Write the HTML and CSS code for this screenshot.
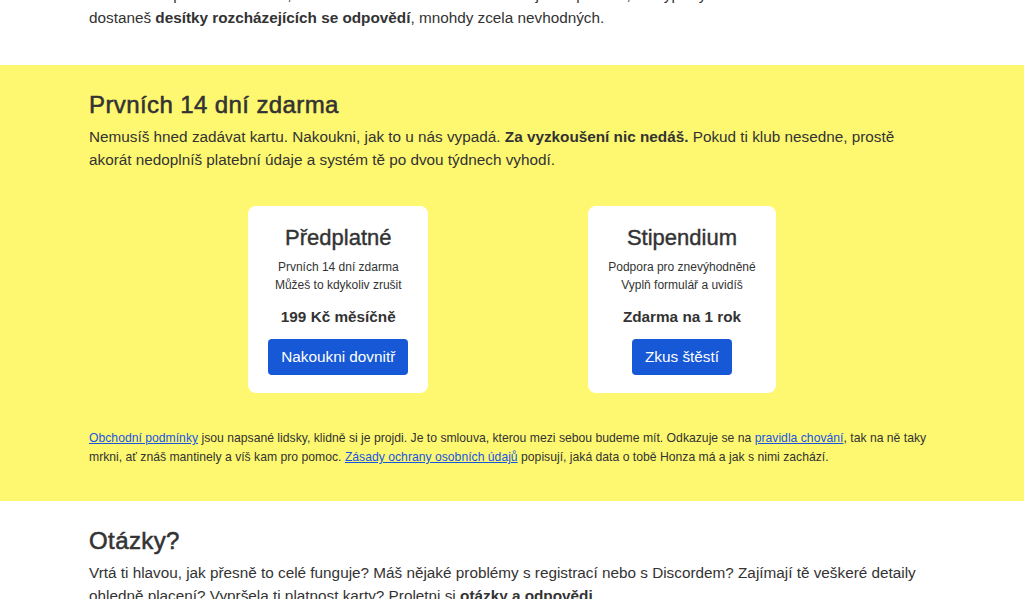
FILE: index.html
```html
<!DOCTYPE html>
<html lang="cs">
<head>
<meta charset="utf-8">
<title>Klub</title>
<link rel="stylesheet" href="styles.css">
</head>
<body>
<section class="section section-intro">
  <div class="container">
    <p class="lead">Pokud se zeptáš na internetu, kde ti nikdo nezná a nikdo nemá zájem ti pomoct, tak typicky</p>
    <p class="lead">dostaneš <strong>desítky rozcházejících se odpovědí</strong>, mnohdy zcela nevhodných.</p>
  </div>
</section>
<section class="section section-yellow">
  <div class="container">
    <h2 class="heading">Prvních 14 dní zdarma</h2>
    <p class="lead">Nemusíš hned zadávat kartu. Nakoukni, jak to u nás vypadá. <strong>Za vyzkoušení nic nedáš.</strong> Pokud ti klub nesedne, prostě akorát nedoplníš platební údaje a systém tě po dvou týdnech vyhodí.</p>
    <div class="plans">
      <div class="plan">
        <h3 class="plan-title">Předplatné</h3>
        <p class="plan-note">Prvních 14 dní zdarma<br>Můžeš to kdykoliv zrušit</p>
        <p class="plan-price">199 Kč měsíčně</p>
        <a class="button" href="#">Nakoukni dovnitř</a>
      </div>
      <div class="plan">
        <h3 class="plan-title">Stipendium</h3>
        <p class="plan-note">Podpora pro znevýhodněné<br>Vyplň formulář a uvidíš</p>
        <p class="plan-price">Zdarma na 1 rok</p>
        <a class="button" href="#">Zkus štěstí</a>
      </div>
    </div>
    <p class="small"><a href="#">Obchodní podmínky</a> jsou napsané lidsky, klidně si je projdi. Je to smlouva, kterou mezi sebou budeme mít. Odkazuje se na <a href="#">pravidla chování</a>, tak na ně taky mrkni, ať znáš mantinely a víš kam pro pomoc. <a href="#">Zásady ochrany osobních údajů</a> popisují, jaká data o tobě Honza má a jak s nimi zachází.</p>
  </div>
</section>
<section class="section section-faq">
  <div class="container">
    <h2 class="heading">Otázky?</h2>
    <p class="lead">Vrtá ti hlavou, jak přesně to celé funguje? Máš nějaké problémy s registrací nebo s Discordem? Zajímají tě veškeré detaily ohledně placení? Vypršela ti platnost karty? Proletni si <strong>otázky a odpovědi</strong>.</p>
  </div>
</section>
</body>
</html>
```
FILE: styles.css
```css
* { box-sizing: border-box; }
html, body {
  margin: 0;
  padding: 0;
  background: #ffffff;
  color: #333333;
  font-family: "Liberation Sans", Arial, sans-serif;
}
body { overflow: hidden; height: 599px; }
.container {
  max-width: 846px;
  margin: 0 auto;
  padding-right: 3px;
}
.section-intro {
  margin-top: -17px;
  padding-bottom: 36px;
}
.lead {
  font-size: 15.3px;
  line-height: 23px;
  margin: 0;
}
.section-yellow {
  background: #fef870;
  padding: 25px 0 34px;
}
.heading {
  font-size: 24px;
  line-height: 30px;
  font-weight: 400;
  -webkit-text-stroke: 0.55px #333333;
  letter-spacing: 0.4px;
  margin: 0 0 5px;
  color: #333333;
}
.plans {
  display: flex;
  justify-content: center;
  gap: 160px;
  margin: 35px -3px 36px 0;
}
.plan {
  background: #ffffff;
  border-radius: 8px;
  padding: 19px 20px 18px;
  display: flex;
  flex-direction: column;
  align-items: center;
  text-align: center;
}
.plan-title {
  font-size: 22px;
  line-height: 26px;
  font-weight: 400;
  -webkit-text-stroke: 0.4px #333333;
  margin: 0 0 7px;
}
.plan-note {
  font-size: 12px;
  line-height: 18px;
  margin: 0 0 13px;
}
.plan-price {
  font-size: 15.3px;
  line-height: 20px;
  font-weight: 700;
  margin: 0 0 12px;
}
.button {
  display: inline-block;
  background: #1758d6;
  color: #ffffff;
  text-decoration: none;
  font-size: 15.3px;
  line-height: 20px;
  padding: 8px 13px;
  border-radius: 4px;
}
.small {
  font-size: 12.2px;
  line-height: 19px;
  margin: 0;
}
.small a { color: #1a55e0; }
.section-faq {
  padding-top: 25px;
}
```
